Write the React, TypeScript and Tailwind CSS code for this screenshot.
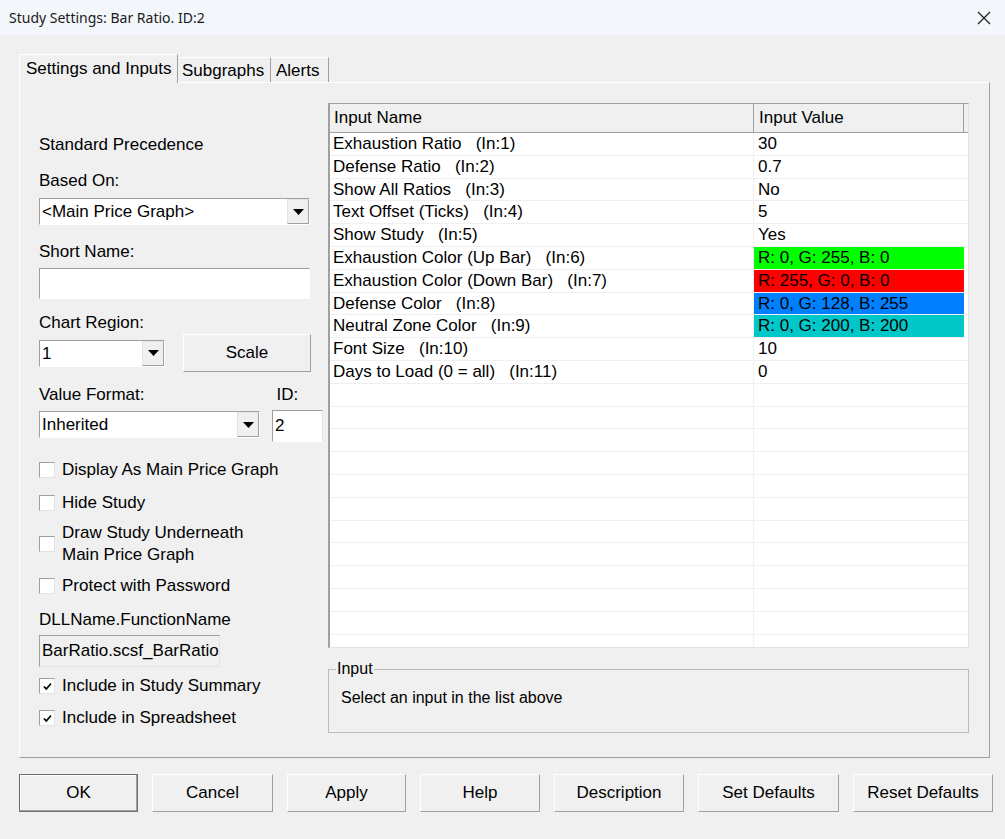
import React from 'react'

const font = "font-['Liberation_Sans',Arial,sans-serif]"

const inputs = [
  { name: 'Exhaustion Ratio   (In:1)', value: '30' },
  { name: 'Defense Ratio   (In:2)', value: '0.7' },
  { name: 'Show All Ratios   (In:3)', value: 'No' },
  { name: 'Text Offset (Ticks)   (In:4)', value: '5' },
  { name: 'Show Study   (In:5)', value: 'Yes' },
  { name: 'Exhaustion Color (Up Bar)   (In:6)', value: 'R: 0, G: 255, B: 0', color: 'bg-[#00ff00]' },
  { name: 'Exhaustion Color (Down Bar)   (In:7)', value: 'R: 255, G: 0, B: 0', color: 'bg-[#ff0000]' },
  { name: 'Defense Color   (In:8)', value: 'R: 0, G: 128, B: 255', color: 'bg-[#0080ff]' },
  { name: 'Neutral Zone Color   (In:9)', value: 'R: 0, G: 200, B: 200', color: 'bg-[#00c8c8]' },
  { name: 'Font Size   (In:10)', value: '10' },
  { name: 'Days to Load (0 = all)   (In:11)', value: '0' },
]

const emptyRows = Array.from({ length: 12 }, (_, i) => i)

const buttons = [
  { label: 'OK', w: 'w-[119px]', primary: true },
  { label: 'Cancel', w: 'w-[121px]' },
  { label: 'Apply', w: 'w-[119px]' },
  { label: 'Help', w: 'w-[120px]' },
  { label: 'Description', w: 'w-[130px]' },
  { label: 'Set Defaults', w: 'w-[141px]' },
  { label: 'Reset Defaults', w: 'w-[140px]' },
]

function Arrow() {
  return (
    <svg width="11" height="6" viewBox="0 0 11 6">
      <path d="M0 0H11L5.5 6Z" fill="#000" />
    </svg>
  )
}

function Combo({ value, className }: { value: string; className: string }) {
  return (
    <div
      className={`flex h-[27px] items-stretch border border-b-white border-l-[#a0a0a0] border-r-white border-t-[#a0a0a0] bg-white ${className}`}
    >
      <span className="flex-1 truncate pl-[2px] leading-[25px]">{value}</span>
      <span className="flex w-[22px] items-center justify-center border border-b-[#a0a0a0] border-l-[#e3e3e3] border-r-[#a0a0a0] border-t-[#e3e3e3] bg-[#f0f0f0]">
        <Arrow />
      </span>
    </div>
  )
}

function Check({ checked, children, className = '' }: { checked?: boolean; children: React.ReactNode; className?: string }) {
  return (
    <div className={`flex items-center gap-[7px] ${className}`}>
      <span className="flex h-[16px] w-[16px] shrink-0 items-center justify-center border border-b-[#e3e3e3] border-l-[#a0a0a0] border-r-[#e3e3e3] border-t-[#a0a0a0] bg-white">
        {checked && (
          <svg width="9" height="9" viewBox="0 0 9 9">
            <path d="M1 4.5L3.3 7L8 1.5" fill="none" stroke="#000" strokeWidth="1.8" />
          </svg>
        )}
      </span>
      <span className="leading-[22px]">{children}</span>
    </div>
  )
}

export default function App() {
  return (
    <div className={`flex h-[839px] w-[1005px] flex-col overflow-hidden bg-[#f0f0f0] text-[17px] text-black ${font}`}>
      {/* title bar */}
      <div className="flex h-[35px] shrink-0 items-center justify-between bg-[#f3f6fb] pl-[9px] pr-[14px]">
        <span className="font-['Noto_Sans',sans-serif] text-[14px] text-[#1a1a1a]">Study Settings: Bar Ratio. ID:2</span>
        <svg width="14" height="14" viewBox="0 0 14 14">
          <path d="M1 1L13 13M13 1L1 13" stroke="#222" strokeWidth="1.3" />
        </svg>
      </div>

      <div className="flex flex-col pl-[19px] pr-[15px] pt-[19px]">
        {/* tabs */}
        <div className="flex h-[28px] items-end">
          <div className="relative z-10 -mb-[1px] flex h-[29px] w-[159px] items-center border-l border-r border-t border-l-white border-r-[#a0a0a0] border-t-white bg-[#f0f0f0] pl-[6px]">
            Settings and Inputs
          </div>
          <div className="flex h-[25px] w-[93px] items-center border-r border-t border-r-[#a0a0a0] border-t-white pl-[4px] pt-[2px]">
            Subgraphs
          </div>
          <div className="flex h-[25px] w-[58px] items-center border-r border-t border-r-[#a0a0a0] border-t-white pl-[5px] pt-[2px]">
            Alerts
          </div>
        </div>

        {/* panel */}
        <div className="flex h-[676px] border border-b-[#a0a0a0] border-l-white border-r-[#a0a0a0] border-t-white pl-[19px] pr-[20px]">
          {/* left column */}
          <div className="flex w-[289px] shrink-0 flex-col pt-[52px]">
            <div className="leading-[20px]">Standard Precedence</div>
            <div className="mt-[16px] leading-[20px]">Based On:</div>
            <Combo value="<Main Price Graph>" className="mt-[7px] w-[271px]" />
            <div className="mt-[17px] leading-[20px]">Short Name:</div>
            <div className="mt-[6px] h-[31px] w-[271px] border border-b-white border-l-[#a0a0a0] border-r-white border-t-[#a0a0a0] bg-white" />
            <div className="mt-[14px] leading-[20px]">Chart Region:</div>
            <div className="mt-[1px] flex h-[38px] items-center">
              <Combo value="1" className="w-[126px]" />
              <button className="ml-[18px] h-[38px] w-[128px] border border-b-[#a0a0a0] border-l-white border-r-[#a0a0a0] border-t-white bg-[#f0f0f0]">
                Scale
              </button>
            </div>
            <div className="mt-[13px] flex leading-[20px]">
              <span>Value Format:</span>
              <span className="ml-[132px]">ID:</span>
            </div>
            <div className="mt-[5px] flex items-start">
              <Combo value="Inherited" className="mt-[1px] w-[221px]" />
              <div className="ml-[12px] h-[32px] w-[51px] border border-b-white border-l-[#a0a0a0] border-r-[#e3e3e3] border-t-[#a0a0a0] bg-white pl-[2px] leading-[30px]">
                2
              </div>
            </div>
            <Check className="mt-[17px]">Display As Main Price Graph</Check>
            <Check className="mt-[11px]">Hide Study</Check>
            <Check className="mt-[8px]">
              Draw Study Underneath
              <br />
              Main Price Graph
            </Check>
            <Check className="mt-[9px]">Protect with Password</Check>
            <div className="mt-[13px] leading-[20px]">DLLName.FunctionName</div>
            <div className="mt-[5px] h-[32px] w-[181px] border border-b-[#e3e3e3] border-l-[#a0a0a0] border-r-[#e3e3e3] border-t-[#a0a0a0] bg-[#f0f0f0] pl-[2px] leading-[30px]">
              BarRatio.scsf_BarRatio
            </div>
            <Check checked className="mt-[8px]">
              Include in Study Summary
            </Check>
            <Check checked className="mt-[10px]">
              Include in Spreadsheet
            </Check>
          </div>

          {/* right column */}
          <div className="flex flex-1 flex-col pt-[20px]">
            <div className="flex h-[545px] flex-col overflow-hidden border border-b-[#e3e3e3] border-l-2 border-l-[#a0a0a0] border-r-[#e3e3e3] border-t-[#a0a0a0] bg-white">
              <div className="flex h-[29px] shrink-0 border-b border-[#a0a0a0] bg-[#f0f0f0]">
                <div className="w-[424px] border-r border-[#a0a0a0] pl-[4px] leading-[27px]">Input Name</div>
                <div className="w-[210px] border-r border-[#a0a0a0] pl-[5px] leading-[27px]">Input Value</div>
                <div className="flex-1" />
              </div>
              {inputs.map((row) => (
                <div key={row.name} className="flex h-[22.8px] shrink-0 border-b border-[#f0f0f0]">
                  <div className="w-[424px] whitespace-pre border-r border-[#f0f0f0] pl-[3px] leading-[22px]">{row.name}</div>
                  <div className={`w-[210px] pl-[4px] leading-[22px] ${row.color ?? ''}`}>{row.value}</div>
                </div>
              ))}
              {emptyRows.map((i) => (
                <div key={i} className="flex h-[22.8px] shrink-0 border-b border-[#f0f0f0]">
                  <div className="w-[424px] border-r border-[#f0f0f0]" />
                </div>
              ))}
            </div>

            <fieldset className="mt-[12px] h-[73px] border border-[#bcbcbc] px-[12px]">
              <legend className="-ml-[5px] px-[1px] text-[16px] leading-[18px]">Input</legend>
              <div className="mt-[8px] text-[16px]">Select an input in the list above</div>
            </fieldset>
          </div>
        </div>

        {/* buttons */}
        <div className="mt-[16px] flex gap-[14px]">
          {buttons.map((b) => (
            <button
              key={b.label}
              className={`h-[38px] shrink-0 ${b.w} bg-[#f0f0f0] ${
                b.primary
                  ? 'border border-[#6e6e6e] shadow-[inset_-1px_-1px_0_#a0a0a0,inset_1px_1px_0_#fff]'
                  : 'border border-b-[#a0a0a0] border-l-white border-r-[#a0a0a0] border-t-white'
              }`}
            >
              {b.label}
            </button>
          ))}
        </div>
      </div>
    </div>
  )
}
